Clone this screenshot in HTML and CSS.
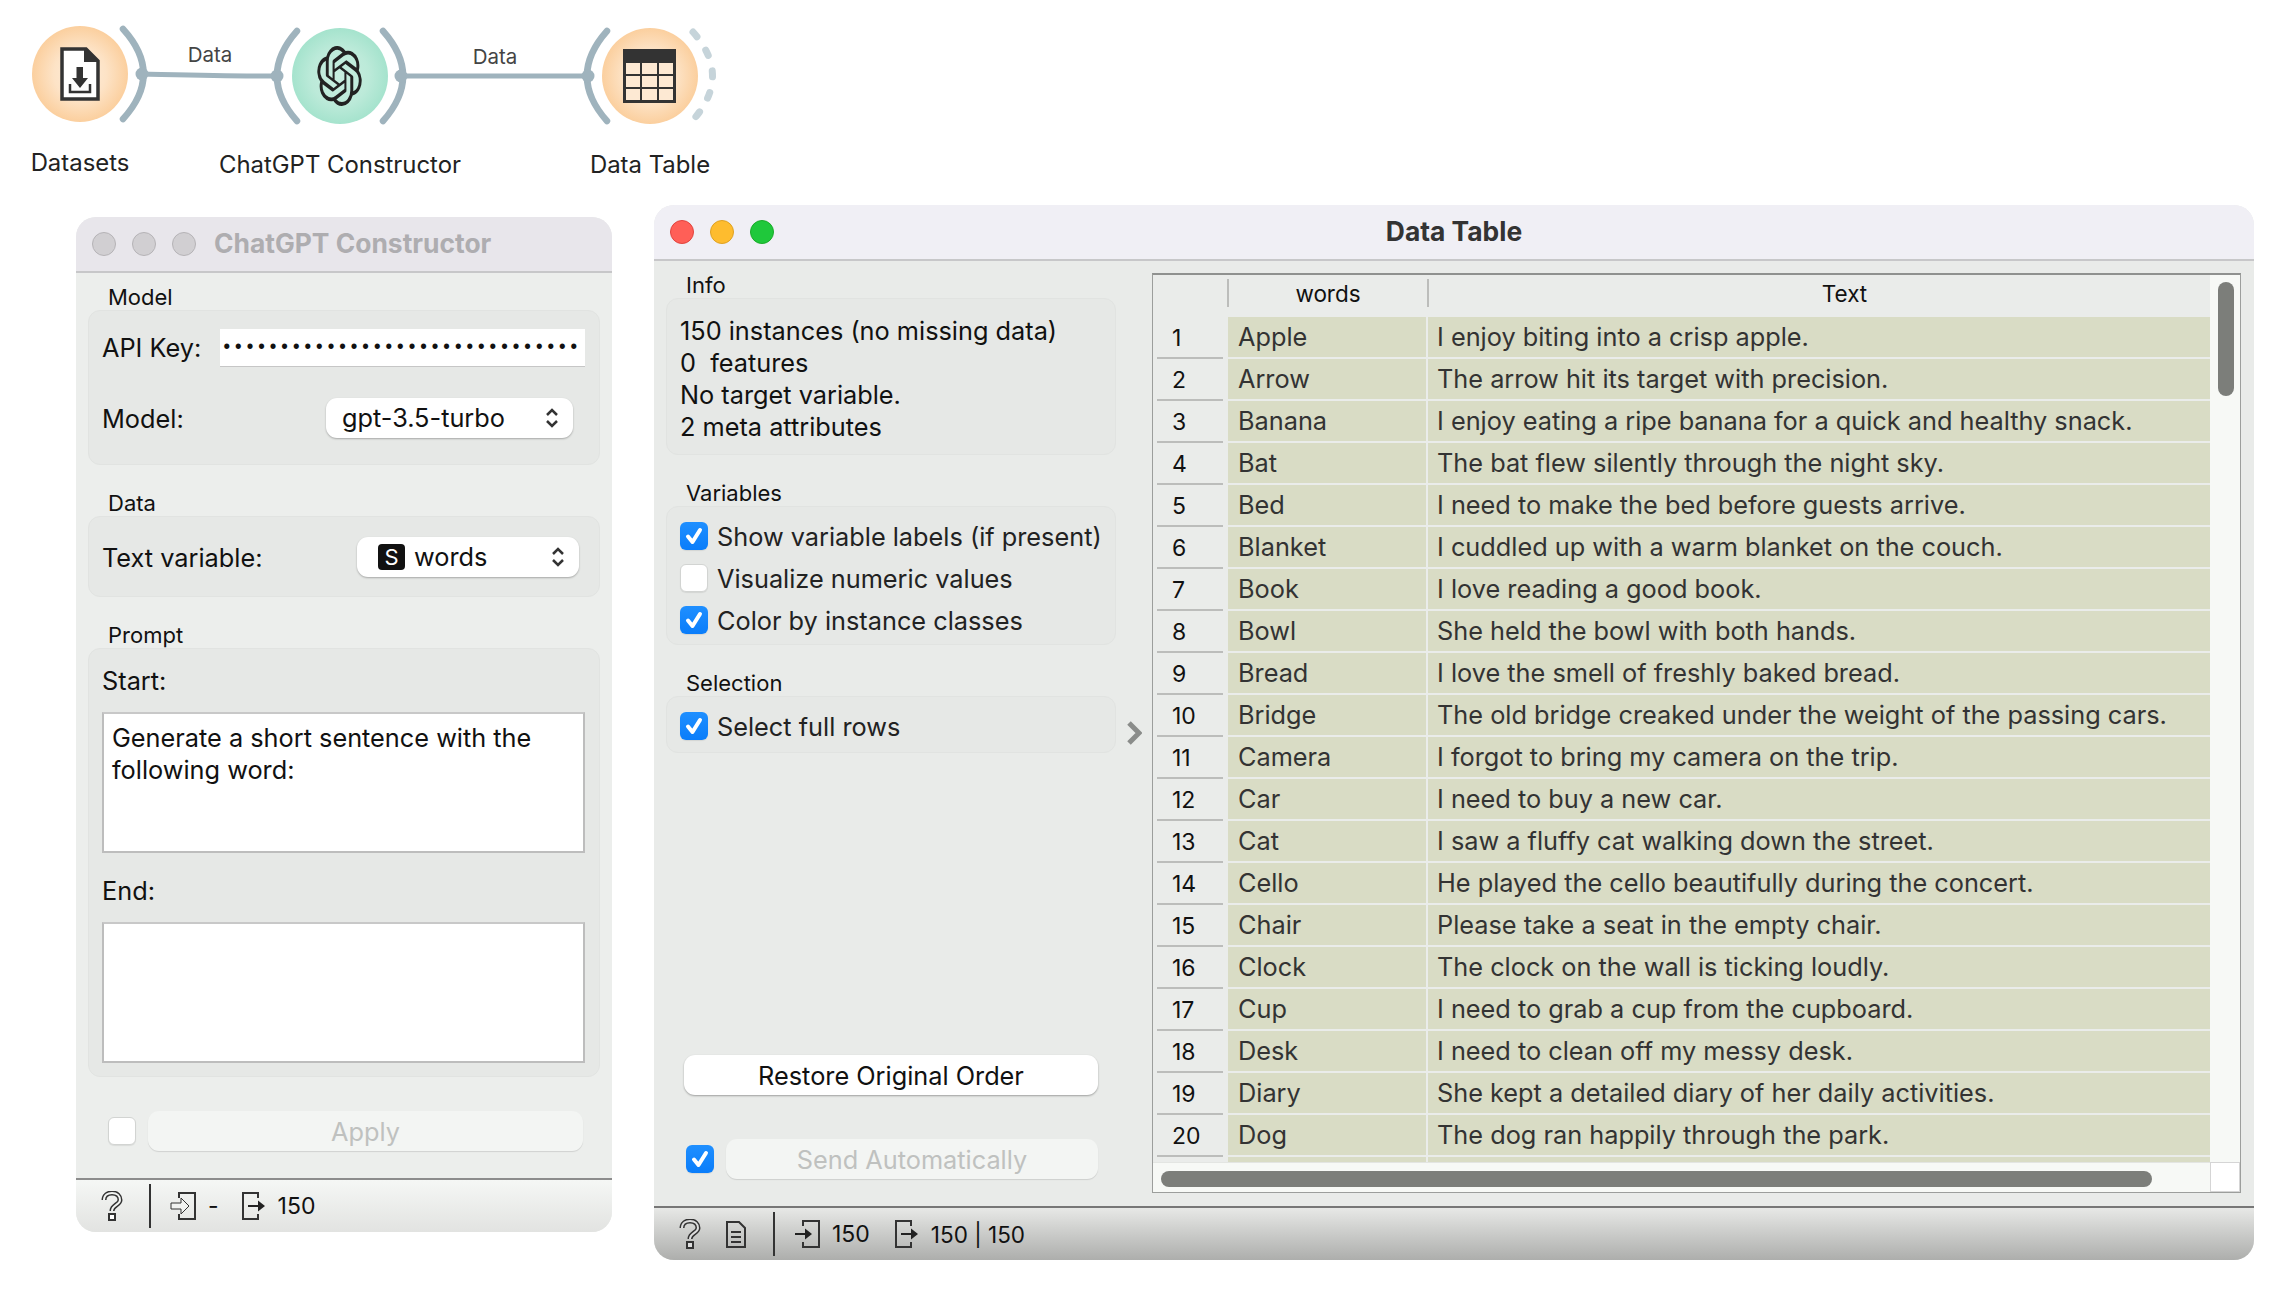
FILE: index.html
```html
<!DOCTYPE html>
<html lang="en">
<head>
<meta charset="utf-8">
<title>Orange workflow</title>
<link rel="stylesheet" href="styles.css">
</head>
<body>
<main class="desk">
  <svg class="flow" width="760" height="190" viewBox="0 0 760 190">
    <defs>
      <radialGradient id="orange"><stop offset="0" stop-color="#fdeedd"/><stop offset="0.55" stop-color="#fde3c6"/><stop offset="1" stop-color="#fbcf9e"/></radialGradient>
      <radialGradient id="green"><stop offset="0" stop-color="#c9eee0"/><stop offset="0.6" stop-color="#bcead9"/><stop offset="1" stop-color="#a5e3cd"/></radialGradient>
    </defs>
    <path class="link" d="M141 74C190 75 230 76 277 76"/>
    <path class="link" d="M401 76H588"/>
    <circle cx="80" cy="74" r="48" fill="url(#orange)"/>
    <circle cx="340" cy="76" r="48" fill="url(#green)"/>
    <circle cx="650" cy="76" r="48" fill="url(#orange)"/>
    <path class="arc" d="M123 29Q164 74 123 119"/>
    <path class="arc" d="M297 31Q257 76 297 121"/>
    <path class="arc" d="M383 31Q423 76 383 121"/>
    <path class="arc" d="M607 31Q567 76 607 121"/>
    <path class="arc dash" d="M693 32Q732 76 693 120"/>
    <circle class="port" cx="142" cy="74" r="6.5"/>
    <circle class="port" cx="277" cy="76" r="6.5"/>
    <circle class="port" cx="401" cy="76" r="6.5"/>
    <circle class="port" cx="588" cy="76" r="6.5"/>
    <g>
      <path d="M62 49H86L98 61V99H62Z" fill="#fff" stroke="#333" stroke-width="3.5"/>
      <path d="M84 48L99 62H84Z" fill="#333"/>
      <path d="M76.5 67H83V78H88L80 88L72 78H76.5Z" fill="#333"/>
      <path d="M70 84V92H90V84" fill="none" stroke="#333" stroke-width="2.5"/>
    </g>
    <svg x="317" y="46" width="45" height="60" viewBox="0 0 24 24" preserveAspectRatio="none"><path fill="#222" d="M22.2819 9.8211a5.9847 5.9847 0 0 0-.5157-4.9108 6.0462 6.0462 0 0 0-6.5098-2.9A6.0651 6.0651 0 0 0 4.9807 4.1818a5.9847 5.9847 0 0 0-3.9977 2.9 6.0462 6.0462 0 0 0 .7427 7.0966 5.98 5.98 0 0 0 .511 4.9107 6.051 6.051 0 0 0 6.5146 2.9001A5.9847 5.9847 0 0 0 13.2599 24a6.0557 6.0557 0 0 0 5.7718-4.2058 5.9894 5.9894 0 0 0 3.9977-2.9001 6.0557 6.0557 0 0 0-.7475-7.0729zm-9.022 12.6081a4.4755 4.4755 0 0 1-2.8764-1.0408l.1419-.0804 4.7783-2.7582a.7948.7948 0 0 0 .3927-.6813v-6.7369l2.02 1.1686a.071.071 0 0 1 .038.052v5.5826a4.504 4.504 0 0 1-4.4945 4.4944zm-9.6607-4.1254a4.4708 4.4708 0 0 1-.5346-3.0137l.142.0852 4.783 2.7582a.7712.7712 0 0 0 .7806 0l5.8428-3.3685v2.3324a.0804.0804 0 0 1-.0332.0615L9.74 19.9502a4.4992 4.4992 0 0 1-6.1408-1.6464zM2.3408 7.8956a4.485 4.485 0 0 1 2.3655-1.9728V11.6a.7664.7664 0 0 0 .3879.6765l5.8144 3.3543-2.0201 1.1685a.0757.0757 0 0 1-.071 0l-4.8303-2.7865A4.504 4.504 0 0 1 2.3408 7.872zm16.5963 3.8558L13.1038 8.364 15.1192 7.2a.0757.0757 0 0 1 .071 0l4.8303 2.7913a4.4944 4.4944 0 0 1-.6765 8.1042v-5.6772a.79.79 0 0 0-.407-.667zm2.0107-3.0231l-.142-.0852-4.7735-2.7818a.7759.7759 0 0 0-.7854 0L9.409 9.2297V6.8974a.0662.0662 0 0 1 .0284-.0615l4.8303-2.7866a4.4992 4.4992 0 0 1 6.6802 4.66zM8.3065 12.863l-2.02-1.1638a.0804.0804 0 0 1-.038-.0567V6.0742a4.4992 4.4992 0 0 1 7.3757-3.4537l-.142.0805L8.704 5.459a.7948.7948 0 0 0-.3927.6813zm1.0976-2.3654l2.602-1.4998 2.6069 1.4998v2.9994l-2.5974 1.4997-2.6067-1.4997Z"/></svg>
    <g>
      <rect x="623" y="49" width="53" height="54" fill="#333"/>
      <g fill="#fde9d3">
        <rect x="626" y="63" width="14" height="11"/><rect x="642" y="63" width="15" height="11"/><rect x="659" y="63" width="14" height="11"/>
        <rect x="626" y="76" width="14" height="11"/><rect x="642" y="76" width="15" height="11"/><rect x="659" y="76" width="14" height="11"/>
        <rect x="626" y="89" width="14" height="11"/><rect x="642" y="89" width="15" height="11"/><rect x="659" y="89" width="14" height="11"/>
      </g>
    </g>
    <text class="edge" x="210" y="62" text-anchor="middle">Data</text>
    <text class="edge" x="495" y="64" text-anchor="middle">Data</text>
    <text class="node" x="80" y="171" text-anchor="middle">Datasets</text>
    <text class="node" x="340" y="173" text-anchor="middle">ChatGPT Constructor</text>
    <text class="node" x="650" y="173" text-anchor="middle">Data Table</text>
  </svg>

  <section class="win win-left">
    <header class="title title-off">
      <span class="lights"><i class="light off"></i><i class="light off"></i><i class="light off"></i></span>
      <h1 class="title-text title-text-off">ChatGPT Constructor</h1>
    </header>
    <div class="body body-left">
      <h2 class="glabel">Model</h2>
      <div class="gbox box-model">
        <div class="frow">
          <span>API Key:</span>
          <span class="pass">•••••••••••••••••••••••••••••••</span>
        </div>
        <div class="frow">
          <span class="flabel">Model:</span>
          <span class="select sel-model">gpt-3.5-turbo
            <svg class="updown" width="14" height="22" viewBox="0 0 14 22"><path d="M2 8L7 3L12 8M2 14L7 19L12 14"/></svg>
          </span>
        </div>
      </div>
      <h2 class="glabel gap">Data</h2>
      <div class="gbox box-data">
        <div class="frow">
          <span class="flabel">Text variable:</span>
          <span class="select sel-data"><b class="badge">S</b>words
            <svg class="updown" width="14" height="22" viewBox="0 0 14 22"><path d="M2 8L7 3L12 8M2 14L7 19L12 14"/></svg>
          </span>
        </div>
      </div>
      <h2 class="glabel gap">Prompt</h2>
      <div class="gbox box-prompt">
        <div class="plabel">Start:</div>
        <div class="tarea">Generate a short sentence with the following word:</div>
        <div class="plabel plabel-end">End:</div>
        <div class="tarea"></div>
      </div>
      <div class="applyrow">
        <span class="check"></span>
        <span class="btn btn-off btn-apply">Apply</span>
      </div>
    </div>
    <footer class="status status-light">
      <svg class="qm" width="22" height="30" viewBox="0 0 22 30"><path class="q1" d="M3 9C3 4 7 2 11 2C16 2 19 5 19 9C19 14 11 14 11 20"/><path class="q2" d="M3 9C3 4 7 2 11 2C16 2 19 5 19 9C19 14 11 14 11 20"/><rect x="8" y="23" width="6" height="6" fill="#fff" stroke="#333" stroke-width="2"/></svg>
      <span class="vbar vbar-l"></span>
      <svg class="io io-a" width="26" height="30" viewBox="0 0 26 30"><path d="M9 7V2H25V28H9V23" fill="none" stroke="#333" stroke-width="2"/><path d="M1 12H11V7L19 15L11 23V18H1Z" fill="#f1f3f1" stroke="#333"/></svg>
      <span class="stat dash-text">-</span>
      <svg class="io io-b" width="24" height="30" viewBox="0 0 24 30"><path d="M16 7V2H1V28H16V23" fill="none" stroke="#333" stroke-width="2"/><path d="M6 14H16V9.5L23 15L16 20.500V16H6Z" fill="#222"/></svg>
      <span class="stat">150</span>
    </footer>
  </section>

  <section class="win win-right">
    <header class="title title-on">
      <span class="lights"><i class="light red"></i><i class="light amber"></i><i class="light green"></i></span>
      <h1 class="title-text title-text-on">Data Table</h1>
    </header>
    <div class="body body-right">
      <div class="side">
        <h2 class="glabel">Info</h2>
        <div class="gbox box-info">
          <div>150 instances (no missing data)</div>
          <div class="keep">0  features</div>
          <div>No target variable.</div>
          <div>2 meta attributes</div>
        </div>
        <h2 class="glabel gap">Variables</h2>
        <div class="gbox box-checks">
          <div class="crow"><span class="check on"><svg width="28" height="28" viewBox="0 0 28 28"><path d="M8 14.500L12.500 20L20 8"/></svg></span>Show variable labels (if present)</div>
          <div class="crow"><span class="check"></span>Visualize numeric values</div>
          <div class="crow"><span class="check on"><svg width="28" height="28" viewBox="0 0 28 28"><path d="M8 14.500L12.500 20L20 8"/></svg></span>Color by instance classes</div>
        </div>
        <h2 class="glabel gap">Selection</h2>
        <div class="gbox box-select">
          <div class="crow"><span class="check on"><svg width="28" height="28" viewBox="0 0 28 28"><path d="M8 14.500L12.500 20L20 8"/></svg></span>Select full rows</div>
        </div>
        <div class="btn btn-on btn-restore">Restore Original Order</div>
        <div class="sendrow">
          <span class="check on"><svg width="28" height="28" viewBox="0 0 28 28"><path d="M8 14.500L12.500 20L20 8"/></svg></span>
          <span class="btn btn-off btn-send">Send Automatically</span>
        </div>
      </div>
      <svg class="chev" width="16" height="26" viewBox="0 0 16 26"><path d="M3 3L13 13L3 23"/></svg>
      <div class="table">
        <div class="tmain">
          <div class="thead">
            <span class="hidx"></span>
            <span class="hcol hwords">words</span>
            <span class="hcol htext">Text</span>
          </div>
          <div class="tbody">
            <div class="row"><span class="idx">1</span><span class="c1">Apple</span><span class="c2">I enjoy biting into a crisp apple.</span></div>
            <div class="row"><span class="idx">2</span><span class="c1">Arrow</span><span class="c2">The arrow hit its target with precision.</span></div>
            <div class="row"><span class="idx">3</span><span class="c1">Banana</span><span class="c2">I enjoy eating a ripe banana for a quick and healthy snack.</span></div>
            <div class="row"><span class="idx">4</span><span class="c1">Bat</span><span class="c2">The bat flew silently through the night sky.</span></div>
            <div class="row"><span class="idx">5</span><span class="c1">Bed</span><span class="c2">I need to make the bed before guests arrive.</span></div>
            <div class="row"><span class="idx">6</span><span class="c1">Blanket</span><span class="c2">I cuddled up with a warm blanket on the couch.</span></div>
            <div class="row"><span class="idx">7</span><span class="c1">Book</span><span class="c2">I love reading a good book.</span></div>
            <div class="row"><span class="idx">8</span><span class="c1">Bowl</span><span class="c2">She held the bowl with both hands.</span></div>
            <div class="row"><span class="idx">9</span><span class="c1">Bread</span><span class="c2">I love the smell of freshly baked bread.</span></div>
            <div class="row"><span class="idx">10</span><span class="c1">Bridge</span><span class="c2">The old bridge creaked under the weight of the passing cars.</span></div>
            <div class="row"><span class="idx">11</span><span class="c1">Camera</span><span class="c2">I forgot to bring my camera on the trip.</span></div>
            <div class="row"><span class="idx">12</span><span class="c1">Car</span><span class="c2">I need to buy a new car.</span></div>
            <div class="row"><span class="idx">13</span><span class="c1">Cat</span><span class="c2">I saw a fluffy cat walking down the street.</span></div>
            <div class="row"><span class="idx">14</span><span class="c1">Cello</span><span class="c2">He played the cello beautifully during the concert.</span></div>
            <div class="row"><span class="idx">15</span><span class="c1">Chair</span><span class="c2">Please take a seat in the empty chair.</span></div>
            <div class="row"><span class="idx">16</span><span class="c1">Clock</span><span class="c2">The clock on the wall is ticking loudly.</span></div>
            <div class="row"><span class="idx">17</span><span class="c1">Cup</span><span class="c2">I need to grab a cup from the cupboard.</span></div>
            <div class="row"><span class="idx">18</span><span class="c1">Desk</span><span class="c2">I need to clean off my messy desk.</span></div>
            <div class="row"><span class="idx">19</span><span class="c1">Diary</span><span class="c2">She kept a detailed diary of her daily activities.</span></div>
            <div class="row"><span class="idx">20</span><span class="c1">Dog</span><span class="c2">The dog ran happily through the park.</span></div>
            <div class="row"><span class="idx"></span><span class="c1"></span><span class="c2"></span></div>
          </div>
          <div class="hscroll"><span class="hthumb"></span></div>
        </div>
        <div class="vcol">
          <div class="vscroll"><span class="vthumb"></span></div>
          <div class="corner"></div>
        </div>
      </div>
    </div>
    <footer class="status status-dark">
      <svg class="qm" width="22" height="30" viewBox="0 0 22 30"><path class="q1" d="M3 9C3 4 7 2 11 2C16 2 19 5 19 9C19 14 11 14 11 20"/><path class="q2 q2-dark" d="M3 9C3 4 7 2 11 2C16 2 19 5 19 9C19 14 11 14 11 20"/><rect x="8" y="23" width="6" height="6" fill="#ddd" stroke="#333" stroke-width="2"/></svg>
      <svg class="doc" width="20" height="27" viewBox="0 0 20 27"><path d="M1 1H13L19 7V26H1Z" fill="none" stroke="#333" stroke-width="2"/><path d="M5 11H15M5 16H15M5 21H15" stroke="#333" stroke-width="2"/></svg>
      <span class="vbar vbar-r"></span>
      <svg class="io io-c" width="25" height="30" viewBox="0 0 25 30"><path d="M8 7V2H24V28H8V23" fill="none" stroke="#333" stroke-width="2"/><path d="M0 14H10V9.500L17 15L10 20.500V16H0Z" fill="#222"/></svg>
      <span class="stat stat-c">150</span>
      <svg class="io io-d" width="24" height="30" viewBox="0 0 24 30"><path d="M16 7V2H1V28H16V23" fill="none" stroke="#333" stroke-width="2"/><path d="M6 14H16V9.5L23 15L16 20.500V16H6Z" fill="#222"/></svg>
      <span class="stat stat-d">150 | 150</span>
    </footer>
  </section>
</main>
</body>
</html>
```
FILE: styles.css
```css
* { box-sizing: border-box; }
html, body { margin: 0; padding: 0; background: #fff; }
body { font-family: Inter, "Liberation Sans", sans-serif; color: #111; font-size: 25.300px; }
h1, h2 { margin: 0; font-weight: 400; }
i { display: block; }

.desk { position: relative; width: 2288px; height: 1298px; overflow: hidden; }

/* workflow diagram */
.flow { position: absolute; left: 0; top: 0; }
.link { fill: none; stroke: #9fb3bd; stroke-width: 5; }
.arc { fill: none; stroke: #9fb3bd; stroke-width: 6.500; stroke-linecap: round; }
.dash { stroke: #c6d4da; stroke-dasharray: 6 16; stroke-width: 7; }
.port { fill: #9fb3bd; }
.edge { font-family: Inter, sans-serif; font-size: 20.500px; fill: #444; }
.node { font-family: Inter, sans-serif; font-size: 23.900px; fill: #222; }

/* windows */
.win { position: absolute; display: flex; flex-direction: column; overflow: hidden; background: #eceeec; }
.win-left { left: 76px; top: 217px; width: 536px; height: 1015px; border-radius: 20px; }
.win-right { left: 654px; top: 205px; width: 1600px; height: 1055px; border-radius: 20px; background: #e9ebe9; }

.title { display: flex; align-items: center; flex: none; height: 56px; border-bottom: 2px solid #c7c7c9; position: relative; }
.title-off { background: #e8e6eb; }
.title-on { background: #f0eff5; }
.lights { display: flex; gap: 16px; }
.title-off .lights { margin-left: 16px; }
.title-on .lights { margin-left: 16px; }
.light { width: 24px; height: 24px; border-radius: 50%; }
.off { background: #d1cfd2; border: 1px solid #b5b3b6; }
.red { background: #ff5f57; border: 1px solid #e0443e; }
.amber { background: #febc2e; border: 1px solid #dea123; }
.green { background: #1fc83b; border: 1px solid #1aab29; }
.title-text { font-size: 26.400px; font-weight: 700; line-height: 32px; margin-top: -3px; }
.title-text-off { color: #aeadb0; margin-left: 18px; }
.title-text-on { position: absolute; left: 0; right: 0; text-align: center; color: #333; margin-top: -2px; }

/* groups */
.body { flex: 1; display: flex; min-height: 0; }
.body-left { flex-direction: column; padding: 12px 12px 0; }
.glabel { font-size: 22px; line-height: 25px; height: 25px; margin-left: 20px; color: #111; }
.glabel.gap { margin-top: 26px; }
.gbox { background: #e6e8e6; border: 1px solid #e1e3e1; border-radius: 12px; flex: none; }

.box-model { height: 155px; padding: 17px 14px 0 13px; display: flex; flex-direction: column; gap: 31px; }
.box-data { height: 81px; padding: 20px 14px 0 13px; }
.frow { display: flex; align-items: center; justify-content: space-between; height: 39px; }
.flabel { padding-top: 2px; }
.pass { width: 365px; height: 38px; background: #fff; border-bottom: 1px solid #c6c6c6; font-family: "Liberation Mono", monospace; font-size: 19.300px; line-height: 38px; padding-left: 1px; overflow: hidden; white-space: nowrap; color: #111; }
.select { display: flex; align-items: center; height: 40px; background: #fff; border-radius: 11px; box-shadow: 0 1px 2px rgba(0,0,0,.28); position: relative; }
.sel-model { width: 247px; padding-left: 16px; margin-right: 12px; }
.sel-data { width: 222px; padding-left: 21px; margin-right: 6px; }
.updown { position: absolute; right: 14px; top: 9px; fill: none; stroke: #333; stroke-width: 2.500; }
.badge { width: 27px; height: 26px; background: #111; color: #fff; border-radius: 4px; font-weight: 400; font-size: 22px; line-height: 26px; text-align: center; margin-right: 9px; }

.box-prompt { height: 429px; padding: 15px 14px 0 13px; }
.plabel { height: 33px; line-height: 33px; margin-bottom: 15px; }
.plabel-end { margin-top: 21px; margin-bottom: 15px; }
.tarea { height: 141px; background: #fff; border: 2px solid #bdbdbd; border-top-color: #c8c8c8; padding: 8px 20px 0 8px; line-height: 32px; color: #111; }

.applyrow { display: flex; align-items: center; margin: 34px 17px 0 20px; gap: 12px; }
.check { flex: none; display: block; width: 28px; height: 28px; border-radius: 6px; background: #fff; border: 1px solid #d2d4d2; box-shadow: 0 1px 1px rgba(0,0,0,.08); }
.check.on { background: linear-gradient(#1f8fff, #0a7dfa); border: 0; }
.check svg { display: block; fill: none; stroke: #fff; stroke-width: 4; stroke-linecap: round; stroke-linejoin: round; }
.btn { display: flex; align-items: center; justify-content: center; height: 40px; border-radius: 11px; }
.btn-off { background: #f3f5f3; color: #bfc1bf; box-shadow: 0 1px 1px rgba(0,0,0,.12); }
.btn-on { background: #fff; color: #111; box-shadow: 0 1px 2px rgba(0,0,0,.32); }
.btn-apply { flex: 1; }

/* status bars */
.status { display: flex; align-items: center; flex: none; height: 54px; border-top: 2px solid #8c8c8c; }
.status-light { background: linear-gradient(#f5f7f5, #e2e3e1); }
.status-dark { background: linear-gradient(#e7e8e6, #adaeac); border-top-color: #777; }
.stat { font-size: 23px; color: #111; }
.vbar { width: 2px; height: 44px; background: #333; }
.qm .q1 { fill: none; stroke: #333; stroke-width: 5; }
.qm .q2 { fill: none; stroke: #f2f4f2; stroke-width: 2; }
.qm .q2-dark { stroke: #ddd; }
.status-light .qm { margin-left: 25px; }
.vbar-l { margin-left: 26px; }
.io-a { margin-left: 19px; }
.dash-text { margin-left: 12px; }
.io-b { margin-left: 23px; }
.status-light .stat:last-child { margin-left: 12px; }
.status-dark .qm { margin-left: 25px; }
.doc { margin-left: 25px; }
.vbar-r { margin-left: 27px; }
.io-c { margin-left: 20px; }
.stat-c { margin-left: 12px; }
.io-d { margin-left: 25px; }
.stat-d { margin-left: 12px; font-size: 22.500px; }

/* data table window */
.body-right { padding: 12px 13px 14px 12px; }
.side { width: 450px; flex: none; display: flex; flex-direction: column; }
.box-info { height: 157px; padding: 16px 13px 0; line-height: 32px; }
.keep { white-space: pre; }
.box-checks { height: 139px; padding: 8px 13px 0; }
.box-select { height: 57px; padding: 8px 13px 0; }
.crow { display: flex; align-items: center; gap: 9px; height: 42px; color: #222; }
.btn-restore { margin: auto 18px 0; }
.sendrow { display: flex; align-items: center; gap: 12px; margin: 44px 18px 13px 20px; }
.btn-send { flex: 1; }
.chev { flex: none; margin: 447px 0 0 10px; fill: none; stroke: #8a8c8a; stroke-width: 5; }
.table { flex: none; margin-left: 10px; width: 1089px; height: 920px; display: flex; border: 1px solid #9c9e9c; border-top-width: 2px; border-top-color: #8f918f; background: #eaecea; }
.tmain { width: 1057px; display: flex; flex-direction: column; }
.thead { display: flex; height: 42px; flex: none; color: #111; font-size: 22.500px; }
.hidx { width: 74px; }
.hcol { display: flex; align-items: center; justify-content: center; border-left: 2px solid #bcbdbb; margin: 4px 0 10px; }
.hwords { width: 200px; }
.htext { flex: 1; padding-left: 50px; }
.tbody { flex: 1; overflow: hidden; min-height: 0; }
.row { display: flex; height: 42px; }
.idx { width: 75px; flex: none; padding-left: 19px; display: flex; align-items: center; font-size: 23px; color: #111; position: relative; }
.idx::after { content: ""; position: absolute; left: 4px; right: 5px; bottom: 0; height: 2px; background: #bcbdbb; }
.c1, .c2 { background: #d9dcc5; height: 40px; line-height: 39px; color: #333; white-space: nowrap; }
.c1 { width: 198px; flex: none; padding-left: 10px; margin-right: 2px; }
.c2 { flex: 1; padding-left: 9px; }
.hscroll { height: 30px; flex: none; background: #f7f9f6; padding: 8px 0 0 8px; border-top: 1px solid #e3e5e2; }
.hthumb { display: block; width: 991px; height: 16px; border-radius: 8px; background: #7c7e7a; }
.vcol { flex: 1; display: flex; flex-direction: column; }
.vscroll { flex: 1; background: #f7f9f6; padding: 7px 0 0 8px; }
.vthumb { display: block; width: 16px; height: 114px; border-radius: 8px; background: #7c7e7a; }
.corner { height: 30px; flex: none; background: #fff; border: 1px solid #d5d5d5; }
```
